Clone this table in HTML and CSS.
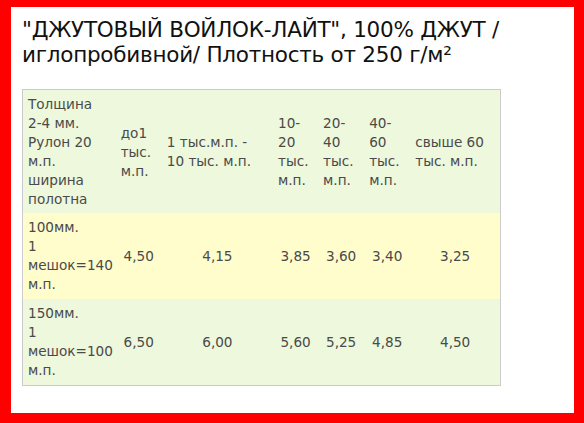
FILE: index.html
```html
<!DOCTYPE html>
<html lang="ru">
<head>
<meta charset="utf-8">
<title>Джутовый войлок-лайт</title>
<link rel="stylesheet" href="styles.css">
</head>
<body>
<div class="frame">
  <h1 class="title">"ДЖУТОВЫЙ ВОЙЛОК-ЛАЙТ", 100% ДЖУТ /<br>иглопробивной/ Плотность от 250 г/м²</h1>
  <table class="prices">
    <colgroup>
      <col class="c1"><col class="c2"><col class="c3"><col class="c4"><col class="c5"><col class="c6"><col class="c7">
    </colgroup>
    <tr class="head">
      <td>Толщина<br>2-4 мм.<br>Рулон 20<br>м.п.<br>ширина<br>полотна</td>
      <td>до1<br>тыс.<br>м.п.</td>
      <td>1 тыс.м.п. -<br>10 тыс. м.п.</td>
      <td>10-<br>20<br>тыс.<br>м.п.</td>
      <td>20-<br>40<br>тыс.<br>м.п.</td>
      <td>40-<br>60<br>тыс.<br>м.п.</td>
      <td>свыше 60<br>тыс. м.п.</td>
    </tr>
    <tr class="odd">
      <td class="name">100мм.<br>1<br>мешок=140<br>м.п.</td>
      <td>4,50</td>
      <td>4,15</td>
      <td>3,85</td>
      <td>3,60</td>
      <td>3,40</td>
      <td>3,25</td>
    </tr>
    <tr class="even">
      <td class="name">150мм.<br>1<br>мешок=100<br>м.п.</td>
      <td>6,50</td>
      <td>6,00</td>
      <td>5,60</td>
      <td>5,25</td>
      <td>4,85</td>
      <td>4,50</td>
    </tr>
  </table>
</div>
</body>
</html>
```
FILE: styles.css
```css
html, body {
  margin: 0;
  padding: 0;
  height: 100%;
  background: #fff;
}
.frame {
  box-sizing: border-box;
  height: 100vh;
  border-style: solid;
  border-color: #ff0000;
  border-width: 7px 10px 10px 11px;
  padding: 10px 11px;
  font-family: "DejaVu Sans", Verdana, sans-serif;
}
.title {
  margin: 0 0 22px;
  font-size: 21.5px;
  line-height: 25px;
  letter-spacing: -0.25px;
  font-weight: normal;
  color: #111;
}
.prices {
  border-collapse: collapse;
  table-layout: fixed;
  width: 479px;
  border: 1px solid #cccccc;
  font-size: 13.6px;
  line-height: 19px;
  color: #4a4a4a;
}
.prices td {
  padding: 5px;
  vertical-align: middle;
  text-align: center;
}
.prices .head td {
  text-align: left;
  padding-top: 5px;
  padding-bottom: 4px;
}
.prices td.name {
  text-align: left;
}
.head, .even { background: #edf8dc; }
.odd { background: #fffdcc; }
.c1 { width: 93px; }
.c2 { width: 46px; }
.c3 { width: 111px; }
.c4 { width: 45px; }
.c5 { width: 46px; }
.c6 { width: 46px; }
.c7 { width: 90px; }
```
